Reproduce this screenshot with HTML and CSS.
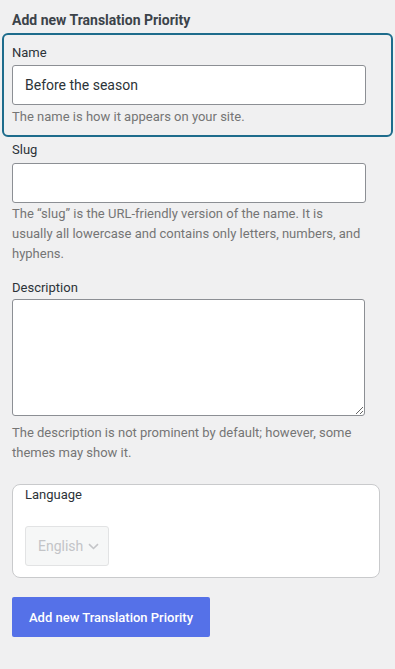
FILE: index.html
```html
<!DOCTYPE html>
<html>
    <head>
        <link rel="stylesheet" href="styles.css">
    </head>
    <body>
        <div class="form-wrap">
            <h2 class="title">Add new Translation Priority</h2>
            <form class="add-form">
                <div class="field field-focus">
                    <label class="label">Name</label>
                    <input class="text-input" type="text" value="Before the season">
                    <p class="help help-name">The name is how it appears on your site.</p>
                </div>
                <div class="field">
                    <label class="label">Slug</label>
                    <input class="text-input" type="text">
                    <p class="help">The “slug” is the URL-friendly version of the name. It is usually all lowercase and contains only letters, numbers, and hyphens.</p>
                </div>
                <div class="field field-desc">
                    <label class="label">Description</label>
                    <textarea class="text-area"></textarea>
                    <p class="help">The description is not prominent by default; however, some themes may show it.</p>
                </div>
                <div class="lang-card">
                    <div class="lang-label">Language</div>
                    <div class="lang-select">
                        <span>English</span>
                        <svg width="11" height="7" viewBox="0 0 11 7"><path d="M1 1.2 L5.5 5.5 L10 1.2" fill="none" stroke="#c4c5c8" stroke-width="1.6"/></svg>
                    </div>
                </div>
                <!-- <div><button></button></div> -->
                <button class="submit" type="button">Add new Translation Priority</button>
            </form>
        </div>
    </body>
</html>
```

FILE: styles.css
```css
body {
    margin: 0;
    background-color: #f0f0f1;
    font-family: Roboto, "Liberation Sans", sans-serif;
    color: #2c3338;
}

.form-wrap {
    padding: 10px 12px 0 12px;
}

.title {
    margin: 0 0 3px 0;
    font-size: 14px;
    line-height: 20px;
    font-weight: 700;
    color: #3c434a;
}

.field {
    display: flex;
    flex-direction: column;
}

.field-focus {
    margin: 0 -10px;
    padding: 9px 8px 8px 8px;
    border: 2px solid #1e6c8c;
    border-radius: 6px;
}

.field-focus .label {
    margin-bottom: 3px;
}

.label {
    font-size: 13px;
    line-height: 18px;
    color: #2c3338;
    margin-bottom: 4px;
}

.field + .field {
    margin-top: 4px;
}

.field-desc {
    margin-top: 15px !important;
}

.field-desc .label {
    margin-bottom: 2px;
}

.text-input {
    box-sizing: border-box;
    width: 354px;
    height: 40px;
    margin: 0;
    padding: 0 12px;
    border: 1px solid #8c8f94;
    border-radius: 3px;
    background: #fff;
    font-family: Roboto, "Liberation Sans", sans-serif;
    font-size: 14px;
    color: #2c3338;
    outline: none;
}

.text-area {
    box-sizing: border-box;
    width: 353px;
    height: 117px;
    margin: 0;
    border: 1px solid #8c8f94;
    border-radius: 3px;
    background: #fff;
    resize: vertical;
}

.help {
    margin: 1px 0 0 0;
    max-width: 350px;
    font-size: 13px;
    line-height: 20px;
    color: #757575;
}

.help-name {
    margin-top: 2px;
}

.field-desc .help {
    margin-top: 7px;
    line-height: 19.5px;
}

.lang-card {
    box-sizing: border-box;
    width: 368px;
    height: 94px;
    margin-top: 22px;
    padding: 1px 12px 0 12px;
    background: #fff;
    border: 1px solid #c9cacc;
    border-radius: 8px;
}

.lang-label {
    font-size: 13px;
    line-height: 18px;
    color: #2c3338;
}

.lang-select {
    box-sizing: border-box;
    display: inline-flex;
    align-items: center;
    gap: 5px;
    width: 84px;
    height: 40px;
    margin-top: 22px;
    padding-left: 12px;
    background: #f6f7f7;
    border: 1px solid #e2e3e4;
    border-radius: 3px;
    font-size: 14px;
    color: #c3c4c7;
}

.submit {
    display: block;
    width: 198px;
    height: 40px;
    margin-top: 19px;
    padding: 0;
    border: none;
    border-radius: 2px;
    background: #5571e8;
    color: #fff;
    font-family: Roboto, "Liberation Sans", sans-serif;
    font-size: 13px;
    font-weight: 500;
}
```
